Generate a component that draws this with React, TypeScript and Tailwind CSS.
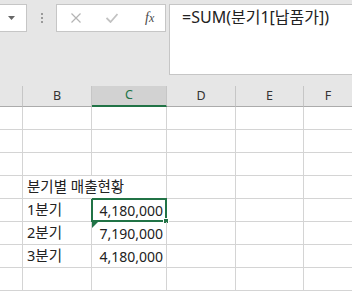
import React from 'react'

const font = '"Noto Sans", "Noto Sans CJK KR", sans-serif'

const cols = ['', 'B', 'C', 'D', 'E', 'F']

type Row = { b?: string; c?: string; selected?: boolean; flag?: boolean; overflow?: boolean }

const rows: Row[] = [
  {},
  {},
  {},
  { b: '분기별 매출현황', overflow: true },
  { b: '1분기', c: '4,180,000', selected: true },
  { b: '2분기', c: '7,190,000', flag: true },
  { b: '3분기', c: '4,180,000' },
  {},
]

function Toolbar() {
  return (
    <div className="flex h-[86px] items-start bg-[#e6e6e6] pt-[4px]">
      {/* name box */}
      <div className="flex h-[28px] w-[27px] items-center justify-end border-y border-r border-[#c6c6c6] bg-white pr-[11px]">
        <svg width="7" height="4" viewBox="0 0 7 4">
          <path d="M0 0 H7 L3.5 4 Z" fill="#666" />
        </svg>
      </div>
      <div className="ml-[14px] mt-[9px] flex w-[2px] flex-col gap-[2px]">
        <div className="h-[2px] w-[2px] bg-[#9a9a9a]" />
        <div className="h-[2px] w-[2px] bg-[#9a9a9a]" />
        <div className="h-[2px] w-[2px] bg-[#9a9a9a]" />
      </div>
      {/* cancel / enter / fx */}
      <div className="ml-[13px] flex h-[28px] w-[110px] items-center border border-[#c6c6c6] bg-white">
        <svg className="ml-[14px]" width="10" height="10" viewBox="0 0 10 10">
          <path d="M0.5 0.5 L9.5 9.5 M9.5 0.5 L0.5 9.5" stroke="#b4b4b4" strokeWidth="1.2" />
        </svg>
        <svg className="ml-[25px]" width="12" height="10" viewBox="0 0 12 10">
          <path d="M0.5 5 L4.5 9 L11.5 1" stroke="#c2c2c2" strokeWidth="1.8" fill="none" />
        </svg>
        <span
          className="ml-[27px] text-[14px] italic leading-none text-[#4a4a4a]"
          style={{ fontFamily: '"Liberation Serif", serif' }}
        >
          f<span className="text-[12px]">x</span>
        </span>
      </div>
      {/* formula input */}
      <div
        className="ml-[3px] h-[71px] flex-1 border-y border-l border-[#c6c6c6] bg-white pl-[12px] pt-[2px] text-[16px] leading-[21px] text-[#222]"
        style={{ fontFamily: font }}
      >
        =SUM(분기1[납품가])
      </div>
    </div>
  )
}

export default function App() {
  return (
    <div className="h-[291px] w-[352px] overflow-hidden bg-white" style={{ fontFamily: font }}>
      <Toolbar />
      <div className="grid grid-cols-[23px_69px_75px_69px_68px_1fr]">
        {cols.map((c, i) => (
          <div
            key={'h' + i}
            className={
              'flex h-[21px] items-center justify-center border-b border-[#ababab] text-[12.5px] leading-none ' +
              (c === 'C'
                ? 'border-b-2 border-b-[#217346] bg-[#d2d2d2] text-[#217346]'
                : 'bg-[#e6e6e6] text-[#333]') +
              (i < cols.length - 1 ? ' border-r border-r-[#c6c6c6]' : '')
            }
          >
            {c}
          </div>
        ))}
        {rows.map((r, ri) => (
          <React.Fragment key={ri}>
            <div className="h-[23px] border-b border-r border-[#d4d4d4]" />
            <div
              className={
                'relative flex h-[23px] items-center whitespace-nowrap border-b border-[#d4d4d4] pl-[4px] text-[14.5px] text-[#222] ' +
                (r.overflow ? 'z-10' : 'border-r')
              }
            >
              {r.b}
            </div>
            <div className="relative flex h-[23px] items-center justify-end border-b border-r border-[#d4d4d4] pr-[3px] text-[14px] text-[#222]">
              {r.c}
              {r.selected && (
                <>
                  <div className="absolute -left-[1px] -top-[1px] h-[24px] w-[76px] border-2 border-[#217346]" />
                  <div className="absolute -bottom-[3px] -right-[3px] h-[6px] w-[6px] border border-white bg-[#217346]" />
                </>
              )}
              {r.flag && (
                <svg className="absolute left-0 top-0" width="6" height="6" viewBox="0 0 6 6">
                  <path d="M0 0 H6 L0 6 Z" fill="#217346" />
                </svg>
              )}
            </div>
            <div className="h-[23px] border-b border-r border-[#d4d4d4]" />
            <div className="h-[23px] border-b border-r border-[#d4d4d4]" />
            <div className="h-[23px] border-b border-[#d4d4d4]" />
          </React.Fragment>
        ))}
      </div>
    </div>
  )
}
